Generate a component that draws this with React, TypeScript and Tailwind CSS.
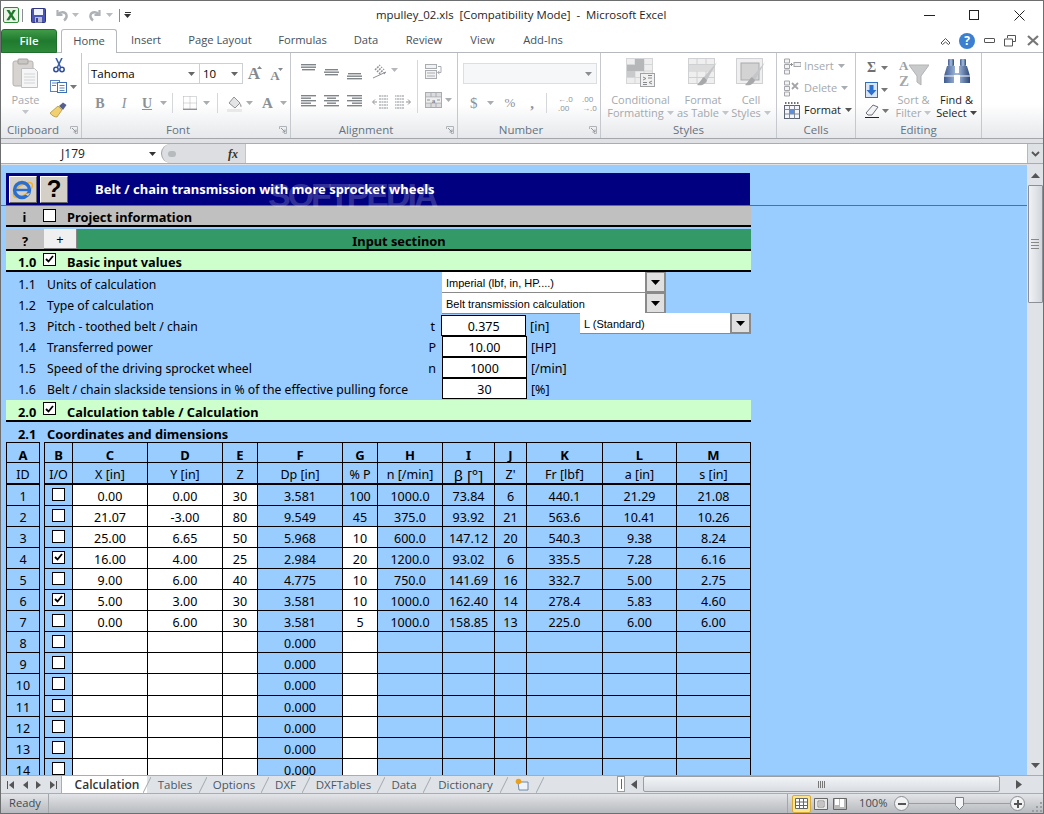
import type { ReactNode } from 'react';

// ── Small drawn parts ────────────────────────────────────────────────────────

function Caret({ className = 'text-[#a9adb2]' }: { className?: string }) {
  return (
    <svg width="7" height="4" viewBox="0 0 7 4" className={`shrink-0 ${className}`}>
      <path d="M0 0h7L3.5 4z" fill="currentColor" />
    </svg>
  );
}

function Lines({ rows, y = 3 }: { rows: [number, number][]; y?: number }) {
  return (
    <svg width="16" height={rows.length * y + 2} className="shrink-0">
      {rows.map(([a, b], i) => (
        <rect key={i} x={a} y={i * y} width={b - a} height="1.4" fill="#7f8489" />
      ))}
    </svg>
  );
}

function ExcelIcon() {
  return (
    <svg width="16" height="16" viewBox="0 0 16 16">
      <rect x=".5" y=".5" width="15" height="15" rx="1.5" fill="#e9f3e6" stroke="#2f8a3a" />
      <path d="M3.5 3h3l1.7 3L10 3h2.8L9.6 8l3.4 5.2H10L8.1 10l-1.9 3.2H3.3L6.7 8z" fill="#1f7a2f" />
    </svg>
  );
}

function SaveIcon() {
  return (
    <svg width="15" height="15" viewBox="0 0 15 15">
      <rect x=".5" y=".5" width="14" height="14" rx="1" fill="#4a55b5" stroke="#2f3580" />
      <rect x="3" y="1" width="9" height="6" fill="#eef2fb" />
      <rect x="4" y="9" width="7" height="5.5" fill="#b8bdd6" />
      <rect x="5" y="10" width="2" height="4" fill="#3d4590" />
    </svg>
  );
}

function UndoIcon({ flip = false }: { flip?: boolean }) {
  return (
    <svg width="15" height="14" viewBox="0 0 15 14" className={flip ? '-scale-x-100' : ''}>
      <path d="M3.5 2v5h5" fill="none" stroke="#aeb2b7" strokeWidth="2.2" />
      <path d="M4 6.5c2-3 7.5-3 8.5 .5 .5 2-.5 4-2.5 5.5" fill="none" stroke="#aeb2b7" strokeWidth="2.4" />
    </svg>
  );
}

function PasteIcon() {
  return (
    <svg width="27" height="31" viewBox="0 0 27 31">
      <rect x="1" y="3" width="20" height="25" rx="2" fill="#d6d3d0" stroke="#b5b2ae" />
      <rect x="6" y="1" width="10" height="5" rx="1" fill="#c9c7c4" stroke="#a5a3a0" />
      <path d="M9.5 10.5h13l3 3v16h-16z" fill="#f6f6f6" stroke="#bdbfc2" />
      <path d="M12 16h11M12 19h11M12 22h11M12 25h11" stroke="#d2d4d7" />
    </svg>
  );
}

function ScissorsIcon() {
  return (
    <svg width="12" height="15" viewBox="0 0 12 15">
      <path d="M3 0l4.5 9M9 0L4.5 9" stroke="#3b5fa8" strokeWidth="1.6" />
      <circle cx="3" cy="11.5" r="2.2" fill="none" stroke="#2f4f99" strokeWidth="1.5" />
      <circle cx="9" cy="11.5" r="2.2" fill="none" stroke="#2f4f99" strokeWidth="1.5" />
    </svg>
  );
}

function CopyIcon() {
  return (
    <svg width="17" height="13" viewBox="0 0 17 13">
      <rect x=".5" y=".5" width="9" height="11" fill="#fff" stroke="#5a85c0" />
      <rect x="7.5" y="2.5" width="9" height="10" fill="#fff" stroke="#3f6fb0" />
      <path d="M2 3h5M2 5.5h4M9.5 5.5h5M9.5 8h5M9.5 10.5h5" stroke="#5a85c0" />
    </svg>
  );
}

function BrushIcon() {
  return (
    <svg width="17" height="16" viewBox="0 0 17 16">
      <path d="M0 11L8 4l4 4-5 7c-2 0-5-1-7-4z" fill="#f0d070" stroke="#a98b30" strokeWidth=".7" />
      <path d="M9 4l4-3.5 3.5 2.5-3.5 5z" fill="#55608c" />
    </svg>
  );
}

function GrowA({ small = false }: { small?: boolean }) {
  return (
    <span className="relative flex h-[16px] w-[16px] items-end justify-center font-['Liberation_Serif',serif] font-bold leading-none text-[#85898e]">
      <span className={small ? 'text-[13px]' : 'text-[17px]'}>A</span>
      <svg width="5" height="3" className={`absolute right-0 ${small ? 'top-[2px] rotate-180' : 'top-0'}`}>
        <path d="M0 3h5L2.5 0z" fill="#85898e" />
      </svg>
    </span>
  );
}

function BorderIcon() {
  return (
    <svg width="14" height="14" viewBox="0 0 14 14">
      <path d="M.5 .5h13v13M.5 .5v13M7 .5v13M.5 7h13" stroke="#b2b5b9" strokeDasharray="1 1" fill="none" />
      <path d="M0 13.3h14" stroke="#8f9296" strokeWidth="1.4" />
    </svg>
  );
}

function FillIcon() {
  return (
    <svg width="16" height="17" viewBox="0 0 16 17">
      <path d="M2 8l5-6 6 6-5 5z" fill="#e4e5e7" stroke="#909397" />
      <path d="M13 8c2 2 2 4 1 4s-1.5-2-1-4z" fill="#a8abae" />
      <rect x="0" y="14" width="15" height="3" fill="#e9e9ea" />
    </svg>
  );
}

function OrientationIcon() {
  return (
    <svg width="16" height="16" viewBox="0 0 16 16">
      <path d="M3 7l5-5M5 9l5-5M7 11l5-5" stroke="#8d9196" strokeWidth="1.5" strokeDasharray="2 1" />
      <path d="M1 15L14 9" stroke="#8d9196" />
      <path d="M14 9l-3 .2 1.5 2.3z" fill="#8d9196" />
    </svg>
  );
}

function WrapIcon() {
  return (
    <svg width="17" height="15" viewBox="0 0 17 15">
      <rect x=".5" y=".5" width="11" height="4" fill="#f2f2f3" stroke="#a9acb0" />
      <rect x=".5" y="6.5" width="11" height="8" fill="#f2f2f3" stroke="#a9acb0" />
      <path d="M2 9h8M2 12h8" stroke="#a9acb0" />
      <path d="M13 2.5h3v6h-3M14.5 7l-2 1.5 2 1.5" stroke="#a9acb0" fill="none" />
    </svg>
  );
}

function MergeIcon() {
  return (
    <svg width="17" height="16" viewBox="0 0 17 16">
      <rect x=".5" y=".5" width="16" height="15" fill="#dcdcde" stroke="#a9acb0" />
      <path d="M.5 5h16M.5 11h16M6 .5V5M11 .5V5M6 11v4.5M11 11v4.5" stroke="#a9acb0" />
      <rect x="1" y="5.5" width="15" height="5" fill="#eeeeef" />
      <text x="8.5" y="10.5" fontSize="7" fontFamily="Liberation Serif" fontWeight="700" textAnchor="middle" fill="#7f8287">a</text>
      <path d="M2 8h3M15 8h-3" stroke="#8d9196" />
    </svg>
  );
}

function IndentIcon({ flip = false }: { flip?: boolean }) {
  return (
    <svg width="16" height="14" viewBox="0 0 16 14" className={flip ? '-scale-x-100' : ''}>
      <path d="M7 1h9M7 4h9M7 7h9M7 10h9M7 13h9" stroke="#8d9196" strokeDasharray="2 .5" />
      <path d="M5 7H1M3 4.5L.5 7 3 9.5" stroke="#8d9196" fill="none" />
    </svg>
  );
}

function CondFormatIcon() {
  return (
    <svg width="29" height="29" viewBox="0 0 29 29">
      <rect x=".5" y=".5" width="26" height="25" fill="#eeeeef" stroke="#d5d6d8" />
      <path d="M9 .5v25M18 .5v25M.5 6.5h26M.5 13h26M.5 19.5h26" stroke="#d5d6d8" />
      <rect x="1" y="7" width="17" height="6" fill="#b6b7b9" />
      <rect x="9" y="1" width="9" height="6" fill="#b6b7b9" />
      <rect x="1" y="13" width="8" height="6" fill="#c9cacb" />
      <rect x="14.5" y="15.5" width="14" height="13" fill="#f1f1f2" stroke="#9fa1a4" />
      <path d="M17 19l3 1.5-3 1.5M26 17.5h-4M26 20h-4M17 24.5h4M17 26.5h4M26 23l-3 1.5 3 1.5" stroke="#85888c" fill="none" />
    </svg>
  );
}

function TableStyleIcon({ cell = false }: { cell?: boolean }) {
  return (
    <svg width="30" height="29" viewBox="0 0 30 29">
      <rect x=".5" y=".5" width="26" height="25" fill="#efeff0" stroke="#d0d1d3" />
      {cell ? (
        <rect x="5" y="5" width="18" height="17" fill="#d3d3d4" stroke="#a9aaac" />
      ) : (
        <>
          <path d="M9 .5v25M18 .5v25M.5 6.5h26M.5 13h26M.5 19.5h26" stroke="#cfd0d2" />
          <rect x="1" y="7" width="25" height="6" fill="#dcdcdd" />
        </>
      )}
      <path d="M29 4L16 19l3 3z" fill="#c5c6c8" />
      <path d="M16 19c-2 1-3 4-7 8 5 1 9-1 10-5z" fill="#a7a8aa" />
    </svg>
  );
}

function FilterIcon() {
  return (
    <svg width="31" height="30" viewBox="0 0 31 30">
      <path d="M11 7h20l-8 11v9l-4-3v-6z" fill="#c9cacb" stroke="#b2b3b5" />
      <text x="1" y="12" fontSize="13" fontWeight="700" fontFamily="Liberation Serif" fill="#9b9da0">A</text>
      <text x="1" y="28" fontSize="15" fontWeight="700" fontFamily="Liberation Serif" fill="#a6a8ab">Z</text>
    </svg>
  );
}

function BinocularsIcon() {
  return (
    <svg width="28" height="26" viewBox="0 0 28 26">
      <defs>
        <linearGradient id="bino" x1="0" x2="1" y1="0" y2="0">
          <stop offset="0" stopColor="#3d5a8f" />
          <stop offset=".5" stopColor="#a8c0e0" />
          <stop offset="1" stopColor="#2e4878" />
        </linearGradient>
      </defs>
      <rect x="5" y="1" width="6" height="7" rx="1" fill="url(#bino)" />
      <rect x="17" y="1" width="6" height="7" rx="1" fill="url(#bino)" />
      <path d="M4 8h8v7h4V8h8l3 10v7H17v-8h-6v8H1v-7z" fill="url(#bino)" />
      <rect x="1" y="17" width="10" height="2" fill="#dfe8f5" opacity=".6" />
      <rect x="17" y="17" width="10" height="2" fill="#dfe8f5" opacity=".6" />
    </svg>
  );
}

function InsertIcon() {
  return (
    <svg width="17" height="17" viewBox="0 0 17 17">
      <path d="M.5 1h5v4h-5zM.5 6.5h5v4h-5zM.5 12h5v4h-5z" fill="#f3f3f4" stroke="#a3a5a8" />
      <rect x="10" y="4.5" width="7" height="4" fill="#f3f3f4" stroke="#a3a5a8" />
      <path d="M6 6.5h3M7.5 5v3" stroke="#8f9296" />
    </svg>
  );
}

function DeleteIcon() {
  return (
    <svg width="17" height="17" viewBox="0 0 17 17">
      <path d="M.5 1h5v4h-5zM.5 6.5h5v4h-5zM.5 12h5v4h-5z" fill="#f3f3f4" stroke="#a3a5a8" />
      <path d="M8 3l6 6M14 3L8 9" stroke="#a3a5a8" strokeWidth="1.8" />
    </svg>
  );
}

function FormatIcon() {
  return (
    <svg width="17" height="17" viewBox="0 0 17 17">
      <rect x=".5" y="3.5" width="15" height="13" fill="#f4f6fb" stroke="#5b6472" />
      <path d="M.5 7.5h15M.5 12h15M5.5 3.5v13M10.5 3.5v13" stroke="#7f8998" />
      <rect x="6" y="8" width="4" height="4" fill="#5f8fdc" />
      <path d="M1 1h14" stroke="#3c4048" strokeDasharray="1.5 1.5" strokeWidth="1.5" />
    </svg>
  );
}

function FillDownIcon() {
  return (
    <svg width="13" height="16" viewBox="0 0 13 16">
      <rect x=".5" y=".5" width="12" height="15" fill="#d7e5f7" stroke="#2f6fc0" />
      <path d="M4.5 3h4v5h3l-5 5.5L1.5 8h3z" fill="#2b6fd0" />
    </svg>
  );
}

function EraserIcon() {
  return (
    <svg width="15" height="14" viewBox="0 0 15 14">
      <path d="M1 9l7-8 5 2-6 8H3z" fill="#f3f4f6" stroke="#6c7078" />
      <path d="M0 13.5h14" stroke="#222" />
    </svg>
  );
}

function Launcher() {
  return (
    <svg width="8" height="8" viewBox="0 0 8 8" className="absolute bottom-[4px] right-[3px]">
      <path d="M.5 3V.5H7.5V7.5H5" fill="none" stroke="#b0b4b9" />
      <path d="M2 2l4 4M6 3.5V6H3.5" fill="none" stroke="#8f959b" />
    </svg>
  );
}

// ── Ribbon ───────────────────────────────────────────────────────────────────

function Group({ className, label, launcher, children }: {
  className: string;
  label: string;
  launcher?: boolean;
  children: ReactNode;
}) {
  return (
    <div className={`relative flex shrink-0 flex-col border-r border-[#c5c9ce] ${className}`}>
      <div className="flex h-[69px] min-h-0">{children}</div>
      <div className={`h-[16px] text-center text-[11.5px] leading-[15px] text-[#66727f] ${launcher ? 'pr-[16px]' : ''}`}>{label}</div>
      {launcher && <Launcher />}
    </div>
  );
}

function BigButton({ icon, top, bottom, dark, className }: {
  icon: ReactNode;
  top: string;
  bottom: string;
  dark?: boolean;
  className: string;
}) {
  return (
    <div className={`flex flex-col items-center pt-[5px] text-[11px] leading-[13px] ${dark ? 'text-[#1c1c1c]' : 'text-[#a4a8ad]'} ${className}`}>
      <div className="flex h-[33px] items-start">{icon}</div>
      <span className="mt-[2px] whitespace-nowrap">{top}</span>
      <span className="flex items-center gap-[3px] whitespace-nowrap">{bottom}<Caret className={dark ? 'text-[#444]' : 'text-[#c2c5c9]'} /></span>
    </div>
  );
}

function CellsRow({ icon, label, dark }: { icon: ReactNode; label: string; dark?: boolean }) {
  return (
    <div className={`flex h-[22px] items-center gap-[3px] text-[11px] ${dark ? 'text-[#1c1c1c]' : 'text-[#a4a8ad]'}`}>
      {icon}
      <span>{label}</span>
      <Caret className={`ml-[1px] ${dark ? 'text-[#555]' : 'text-[#a9adb2]'}`} />
    </div>
  );
}

function Ribbon() {
  return (
    <div className="flex h-[86px] shrink-0 border-b border-[#a3a7ab] bg-gradient-to-b from-white from-60% to-[#e6e8eb]">
      <Group className="w-[81px]" label="Clipboard" launcher>
        <div className="flex w-[49px] flex-col items-center pt-[5px]">
          <PasteIcon />
          <span className="mt-[4px] text-[11px] leading-[13px] text-[#a4a8ad]">Paste</span>
          <Caret className="mt-[4px] text-[#c2c5c9]" />
        </div>
        <div className="flex flex-col pt-[5px]">
          <div className="ml-[3px]"><ScissorsIcon /></div>
          <div className="mt-[7px] flex items-center gap-[3px]"><CopyIcon /><Caret className="text-[#777]" /></div>
          <div className="mt-[9px]"><BrushIcon /></div>
        </div>
      </Group>

      <Group className="w-[209px]" label="Font" launcher>
        <div className="flex flex-col pl-[6px] pt-[10px]">
          <div className="flex items-center">
            <div className="flex h-[21px] w-[112px] items-center justify-between border border-[#ccd0d4] bg-white pl-[2px] pr-[4px] text-[11.5px] text-black">
              Tahoma <Caret className="text-[#666]" />
            </div>
            <div className="flex h-[21px] w-[43px] items-center justify-between border border-l-0 border-[#ccd0d4] bg-white pl-[3px] pr-[4px] text-[11.5px] text-black">
              10 <Caret className="text-[#666]" />
            </div>
            <div className="ml-[3px] flex gap-[5px]"><GrowA /><GrowA small /></div>
          </div>
          <div className="mt-[9px] flex h-[20px] items-center text-[#8d9196]">
            <span className="ml-[2px] w-[20px] text-center font-['Liberation_Serif',serif] text-[14px] font-bold">B</span>
            <span className="ml-[4px] w-[20px] text-center font-['Liberation_Serif',serif] text-[14px] italic">I</span>
            <span className="ml-[3px] w-[20px] text-center font-['Liberation_Serif',serif] text-[14px] font-bold underline">U</span>
            <Caret className="ml-[3px] text-[#a9adb2]" />
            <span className="ml-[5px] h-[20px] w-px bg-[#d5d8db]" />
            <span className="ml-[10px]"><BorderIcon /></span>
            <Caret className="ml-[6px] text-[#a9adb2]" />
            <span className="ml-[7px] h-[20px] w-px bg-[#d5d8db]" />
            <span className="ml-[9px]"><FillIcon /></span>
            <Caret className="ml-[3px] text-[#a9adb2]" />
            <span className="ml-[9px] font-['Liberation_Serif',serif] text-[15px] font-bold">A</span>
            <Caret className="ml-[7px] text-[#a9adb2]" />
          </div>
        </div>
      </Group>

      <Group className="w-[167px]" label="Alignment" launcher>
        <div className="flex flex-col pl-[10px] pt-[10px]">
          <div className="flex h-[22px] gap-[7px]">
            <div className="mt-[1px]"><Lines rows={[[0, 15], [0, 15], [1, 14]]} y={2.5} /></div>
            <div className="mt-[6px]"><Lines rows={[[1, 14], [0, 15], [1, 14]]} y={2.5} /></div>
            <div className="mt-[10px]"><Lines rows={[[1, 14], [0, 15], [0, 15]]} y={2.5} /></div>
            <div className="ml-[2px] flex items-start gap-[3px]"><OrientationIcon /><Caret className="mt-[5px] text-[#b4b7bb]" /></div>
          </div>
          <div className="mt-[10px] flex items-center gap-[7px]">
            <Lines rows={[[0, 15], [0, 10], [0, 15], [0, 10], [0, 15]]} y={2.5} />
            <Lines rows={[[0, 15], [3, 12], [0, 15], [3, 12], [0, 15]]} y={2.5} />
            <Lines rows={[[0, 15], [5, 15], [0, 15], [5, 15], [0, 15]]} y={2.5} />
            <div className="ml-[2px]"><IndentIcon /></div>
            <IndentIcon flip />
          </div>
        </div>
        <span className="ml-[6px] mt-[7px] h-[53px] w-px bg-[#d5d8db]" />
        <div className="ml-[7px] flex flex-col pt-[11px]">
          <WrapIcon />
          <div className="mt-[13px] flex items-center gap-[3px]"><MergeIcon /><Caret /></div>
        </div>
      </Group>

      <Group className="w-[143px]" label="Number" launcher>
        <div className="flex flex-col pl-[5px] pt-[10px]">
          <div className="flex h-[21px] w-[134px] items-center justify-end border border-[#dcdfe2] bg-[#f6f7f8] pr-[4px]">
            <Caret className="text-[#8a8d91]" />
          </div>
          <div className="mt-[9px] flex h-[20px] items-center whitespace-nowrap font-['Liberation_Serif',serif] text-[#8d9196]">
            <span className="ml-[7px] text-[15px]">$</span>
            <Caret className="ml-[9px] text-[#a9adb2]" />
            <span className="ml-[11px] text-[13px]">%</span>
            <span className="ml-[15px] text-[15px] font-bold">,</span>
            <span className="ml-[12px] h-[20px] w-px bg-[#d5d8db]" />
            <span className="ml-[11px] w-[14px] font-['Open_Sans',sans-serif] text-[8px] leading-[9px]">←.0<br />.00</span>
            <span className="ml-[10px] w-[14px] font-['Open_Sans',sans-serif] text-[8px] leading-[9px]">.00<br />→.0</span>
          </div>
        </div>
      </Group>

      <Group className="w-[176px]" label="Styles">
        <BigButton className="w-[79px]" icon={<CondFormatIcon />} top="Conditional" bottom="Formatting" />
        <BigButton className="w-[46px]" icon={<TableStyleIcon />} top="Format" bottom="as Table" />
        <BigButton className="w-[50px]" icon={<TableStyleIcon cell />} top="Cell" bottom="Styles" />
      </Group>

      <Group className="w-[79px]" label="Cells">
        <div className="flex flex-col pl-[7px] pt-[2px]">
          <CellsRow icon={<InsertIcon />} label="Insert" />
          <CellsRow icon={<DeleteIcon />} label="Delete" />
          <CellsRow icon={<FormatIcon />} label="Format" dark />
        </div>
      </Group>

      <Group className="w-[126px]" label="Editing">
        <div className="flex w-[36px] flex-col pl-[9px] pt-[4px]">
          <div className="flex h-[22px] items-center gap-[5px]">
            <span className="ml-[2px] font-['Liberation_Serif',serif] text-[14px] font-bold leading-none text-[#6c7075]">Σ</span>
            <Caret className="text-[#777]" />
          </div>
          <div className="flex h-[22px] items-center gap-[3px]"><FillDownIcon /><Caret className="text-[#777]" /></div>
          <div className="flex h-[22px] items-center gap-[2px]"><EraserIcon /><Caret className="text-[#777]" /></div>
        </div>
        <BigButton className="w-[43px]" icon={<FilterIcon />} top="Sort &" bottom="Filter" />
        <BigButton className="w-[43px]" icon={<BinocularsIcon />} top="Find &" bottom="Select" dark />
      </Group>
    </div>
  );
}

// ── Title bar + tabs ─────────────────────────────────────────────────────────

function TitleBar() {
  return (
    <div className="relative flex h-[28px] shrink-0 items-center bg-white pl-[2px]">
      <ExcelIcon />
      <span className="ml-[3px] h-[13px] w-px bg-[#8a8d91]" />
      <span className="ml-[8px]"><SaveIcon /></span>
      <span className="ml-[8px]"><UndoIcon /></span>
      <Caret className="ml-[3px] text-[#b8bbbf]" />
      <span className="ml-[9px]"><UndoIcon flip /></span>
      <Caret className="ml-[3px] text-[#b8bbbf]" />
      <span className="ml-[6px] h-[13px] w-px bg-[#8a8d91]" />
      <span className="ml-[4px] flex flex-col items-center gap-[1px]">
        <span className="h-px w-[6px] bg-[#333]" />
        <Caret className="text-[#333]" />
      </span>
      <span className="absolute left-[375px] whitespace-pre text-[11.4px] text-[#1e1e1e]">mpulley_02.xls  [Compatibility Mode]  -  Microsoft Excel</span>
      <div className="ml-auto flex items-center pr-[18px]">
        <span className="mt-[1px] h-px w-[11px] bg-[#222]" />
        <span className="ml-[34px] h-[10px] w-[10px] border border-[#222]" />
        <svg width="11" height="11" viewBox="0 0 11 11" className="ml-[35px]">
          <path d="M.5 .5l10 10M10.5 .5l-10 10" stroke="#222" />
        </svg>
      </div>
    </div>
  );
}

const tabs = [
  { label: 'Insert', w: 'w-[58px]' },
  { label: 'Page Layout', w: 'w-[90px]' },
  { label: 'Formulas', w: 'w-[75px]' },
  { label: 'Data', w: 'w-[52px]' },
  { label: 'Review', w: 'w-[64px]' },
  { label: 'View', w: 'w-[53px]' },
  { label: 'Add-Ins', w: 'w-[68px]' },
];

function TabRow() {
  return (
    <div className="flex h-[24px] shrink-0 border-b border-[#b5b9be] bg-white text-[11.2px] text-[#45505c]">
      <div className="flex h-[24px] w-[56px] items-center justify-center rounded-t-[3px] border border-[#1f6e2b] bg-gradient-to-b from-[#3f9a48] via-[#1f7a2e] to-[#2d8a39] text-[11.5px] font-semibold text-white">
        File
      </div>
      <div className="relative z-10 ml-[4px] flex h-[24px] w-[56px] items-center justify-center rounded-t-[3px] border border-b-0 border-[#b5b9be] bg-white">
        Home
      </div>
      {tabs.map(t => (
        <div key={t.label} className={`flex items-center justify-center ${t.w}`}>{t.label}</div>
      ))}
      <div className="ml-auto flex items-center pr-[4px]">
        <svg width="11" height="8" viewBox="0 0 11 8"><path d="M1 6l4.5-4.5L10 6 8.5 7.5 5.5 5l-3 2.5z" fill="#fff" stroke="#555" /></svg>
        <span className="ml-[8px] flex h-[16px] w-[16px] items-center justify-center rounded-full bg-[#3b7fd0] text-[12px] font-bold text-white">?</span>
        <span className="ml-[9px] h-[5px] w-[11px] rounded-[1px] border border-[#555]" />
        <svg width="12" height="12" viewBox="0 0 12 12" className="ml-[9px]"><path d="M3.5 3V.5h8v6H9M.5 4h8v7h-8z" fill="#fff" stroke="#555" /></svg>
        <svg width="12" height="11" viewBox="0 0 12 11" className="ml-[11px]"><path d="M1 1l10 9M11 1L1 10" stroke="#777" strokeWidth="2.2" /></svg>
      </div>
    </div>
  );
}

function FormulaBar() {
  return (
    <div className="flex h-[26px] shrink-0 flex-col bg-[#dfe1e4] pt-[4px]">
      <div className="flex h-[21px] border-y border-[#a9adb1] bg-white text-[12px]">
        <div className="relative flex w-[160px] items-center justify-center pr-[16px] text-[#222]">
          J179
          <Caret className="absolute right-[5px] text-[#333]" />
        </div>
        <div className="flex w-[85px] items-center rounded-l-full border-r border-[#c2c5c9] border-l border-l-[#9fa3a7] bg-[#dcdee1] pl-[6px]">
          <span className="h-[6px] w-[8px] rounded-full bg-[#b7babd]" />
          <span className="ml-auto pr-[7px] font-['Liberation_Serif',serif] text-[12px] font-bold italic text-[#333]">fx</span>
        </div>
        <div className="flex-1" />
        <div className="flex w-[16px] items-center justify-center border-l border-[#b5b9be] bg-[#dfe2e5]">
          <svg width="9" height="6" viewBox="0 0 9 6"><path d="M1 1l3.5 3.5L8 1" fill="none" stroke="#555" strokeWidth="1.8" /></svg>
        </div>
      </div>
    </div>
  );
}

// ── Sheet ────────────────────────────────────────────────────────────────────

function CheckBox({ checked, size = 'h-[13px] w-[13px]' }: { checked?: boolean; size?: string }) {
  return (
    <span className={`flex shrink-0 items-center justify-center border border-black bg-white ${size}`}>
      {checked && (
        <svg width="9" height="8" viewBox="0 0 9 8"><path d="M1 4l2.5 2.5L8 1" fill="none" stroke="#000" strokeWidth="1.8" /></svg>
      )}
    </span>
  );
}

function DropDown({ value, className }: { value: string; className: string }) {
  return (
    <div className={`flex h-[21px] shrink-0 items-stretch border-r-2 border-b border-[#8a8a8a] bg-white ${className}`}>
      <span className="flex flex-1 items-center pl-[4px] pt-[2px] font-['Liberation_Sans',sans-serif] text-[11px]">{value}</span>
      <span className="flex w-[19px] items-center justify-center border-x-2 border-y border-[#8a8a8a] border-r-0 bg-[#e0e0e0]">
        <svg width="9" height="5" viewBox="0 0 9 5"><path d="M0 0h9L4.5 5z" fill="#000" /></svg>
      </span>
    </div>
  );
}

const inputRows: { no: string; label: string; sym?: string; field?: string; unit?: string; drop?: string; extra?: string }[] = [
  { no: '1.1', label: 'Units of calculation', drop: 'Imperial (lbf, in, HP....)' },
  { no: '1.2', label: 'Type of calculation', drop: 'Belt transmission calculation' },
  { no: '1.3', label: 'Pitch - toothed belt / chain', sym: 't', field: '0.375', unit: '[in]', extra: 'L (Standard)' },
  { no: '1.4', label: 'Transferred power', sym: 'P', field: '10.00', unit: '[HP]' },
  { no: '1.5', label: 'Speed of the driving sprocket wheel', sym: 'n', field: '1000', unit: '[/min]' },
  { no: '1.6', label: 'Belt / chain slackside tensions in % of the effective pulling force', field: '30', unit: '[%]' },
];

const colWidths = ['w-[34px]', 'w-[4px]', 'w-[29px]', 'w-[75px]', 'w-[75px]', 'w-[35px]', 'w-[85px]', 'w-[35px]', 'w-[65px]', 'w-[52px]', 'w-[32px]', 'w-[76px]', 'w-[74px]', 'w-[74px]'];

const letters = ['C', 'D', 'E', 'F', 'G', 'H', 'I', 'J', 'K', 'L', 'M'];
const units = ['X [in]', 'Y [in]', 'Z', 'Dp [in]', '% P', 'n [/min]', 'β [°]', "Z'", 'Fr [lbf]', 'a [in]', 's [in]'];

const tableRows = [
  ['0.00', '0.00', '30', '3.581', '100', '1000.0', '73.84', '6', '440.1', '21.29', '21.08'],
  ['21.07', '-3.00', '80', '9.549', '45', '375.0', '93.92', '21', '563.6', '10.41', '10.26'],
  ['25.00', '6.65', '50', '5.968', '10', '600.0', '147.12', '20', '540.3', '9.38', '8.24'],
  ['16.00', '4.00', '25', '2.984', '20', '1200.0', '93.02', '6', '335.5', '7.28', '6.16'],
  ['9.00', '6.00', '40', '4.775', '10', '750.0', '141.69', '16', '332.7', '5.00', '2.75'],
  ['5.00', '3.00', '30', '3.581', '10', '1000.0', '162.40', '14', '278.4', '5.83', '4.60'],
  ['0.00', '6.00', '30', '3.581', '5', '1000.0', '158.85', '13', '225.0', '6.00', '6.00'],
  ...Array.from({ length: 7 }, () => ['', '', '', '0.000', '', '', '', '', '', '', '']),
];

function isWhite(col: number, row: number) {
  if (col <= 2) return true;
  return col === 4 && row >= 2;
}

function CalcTable() {
  const line = 'border-r border-b border-black p-0 text-center';
  return (
    <table className="table-fixed border-separate border-spacing-0 w-[745px]">
      <colgroup>
        {colWidths.map((w, i) => <col key={i} className={w} />)}
      </colgroup>
      <thead>
        <tr className="h-[21px] text-[13px] font-bold">
          <th className={`${line} border-t border-l pt-[5px]`}>A</th>
          <th className="p-0" />
          <th className={`${line} border-t border-l pt-[5px]`}>B</th>
          {letters.map(l => <th key={l} className={`${line} border-t pt-[5px]`}>{l}</th>)}
        </tr>
        <tr className="h-[22px] font-normal">
          <th className={`${line} border-b-[2px] border-l pt-[4px] font-normal`}>ID</th>
          <th className="p-0" />
          <th className={`${line} border-b-[2px] border-l pt-[4px] font-normal`}>I/O</th>
          {units.map(u => (
            <th key={u} className={`${line} border-b-[2px] pt-[4px] font-normal ${u.startsWith('β') ? 'text-[15px]' : ''}`}>{u}</th>
          ))}
        </tr>
      </thead>
      <tbody>
        {tableRows.map((r, i) => (
          <tr key={i} className={i === 9 ? 'h-[22px]' : 'h-[21px]'}>
            <td className={`${line} border-l pt-[4px]`}>{i + 1}</td>
            <td className="p-0" />
            <td className={`${line} border-l`}>
              <div className="flex justify-center pb-[2px]"><CheckBox checked={i === 3 || i === 5} /></div>
            </td>
            {r.map((v, c) => (
              <td key={c} className={`${line} pt-[4px] ${isWhite(c, i) ? 'bg-white' : ''}`}>{v}</td>
            ))}
          </tr>
        ))}
      </tbody>
    </table>
  );
}

function Sheet() {
  return (
    <div className="min-w-0 flex-1 overflow-hidden bg-[#99ccff] font-['Noto_Sans',sans-serif] text-[12.5px] leading-none text-black">
      {/* frozen top pane */}
      <div className="relative h-[41px] border-b border-[#6b6b6b] pl-[5px] pt-[8px]">
        <div className="relative flex h-[32px] w-[744px] items-center bg-[#000080] pl-[3px]">
          <span className="flex h-[27px] w-[28px] items-center justify-center border border-t-white border-l-white border-r-[#666] border-b-[#666] bg-[#d4d0c8]">
            <svg width="24" height="23" viewBox="0 0 24 23">
              <ellipse cx="12" cy="12" rx="11" ry="5" fill="none" stroke="#f0b030" strokeWidth="1.5" transform="rotate(-35 12 12)" />
              <circle cx="11" cy="12" r="7.5" fill="none" stroke="#2a6fd0" strokeWidth="3.4" />
              <path d="M4 12h14" stroke="#2a6fd0" strokeWidth="2.4" />
              <path d="M14 16l5-1-2 3z" fill="#d4d0c8" />
            </svg>
          </span>
          <span className="ml-[3px] flex h-[27px] w-[28px] items-center justify-center border border-t-white border-l-white border-r-[#666] border-b-[#666] bg-[#d4d0c8] font-['Liberation_Sans',sans-serif] text-[24px] font-bold text-black">?</span>
          <span className="relative z-10 ml-[27px] text-[13px] font-bold text-white">Belt / chain transmission with more sprocket wheels</span>
        </div>
        <span className="absolute left-[267px] top-[13px] font-['Liberation_Sans',sans-serif] text-[34px] font-bold tracking-[-3px] text-white/20">SOFTPEDIA</span>
      </div>

      <div className="pl-[5px]">
        <div className="flex h-[21px] w-[745px] items-center border-b-[2px] border-black bg-[#c0c0c0] text-[12.8px] font-bold">
          <span className="w-[37px] pt-[4px] text-center">i</span>
          <CheckBox size="h-[13px] w-[13px] border-[#555]" />
          <span className="ml-[11px] pt-[4px]">Project information</span>
        </div>
        <div className="mt-[2px] flex h-[22px] w-[745px] border-b-[2px] border-black text-[12.8px] font-bold">
          <span className="flex w-[38px] items-center justify-center bg-[#c0c0c0] pt-[4px]">?</span>
          <span className="flex w-[33px] items-center justify-center border-r border-b border-[#888] bg-[#f0f0f0] pt-[2px] font-normal">+</span>
          <span className="flex flex-1 items-center justify-center bg-[#339966] pr-[30px] pt-[4px]">Input sectinon</span>
        </div>
        <div className="flex h-[21px] w-[745px] items-center border-b-[2px] border-black bg-[#ccffcc] text-[12.8px] font-bold">
          <span className="w-[37px] pl-[12px] pt-[4px]">1.0</span>
          <span className="mb-[3px]"><CheckBox checked /></span>
          <span className="ml-[11px] pt-[4px]">Basic input values</span>
        </div>

        {inputRows.map(r => (
          <div key={r.no} className="flex h-[21px] w-[745px] items-center">
            <span className="w-[41px] pl-[1px] pt-[5px] text-center">{r.no}</span>
            <span className="w-[389px] whitespace-nowrap pt-[5px] text-[12.2px]">{r.label}</span>
            <span className="ml-[-10px] w-[10px] pt-[5px] text-right">{r.sym}</span>
            <span className="w-[6px]" />
            {r.drop && <DropDown value={r.drop} className="w-[224px]" />}
            {r.field && (
              <span className="-mb-px flex h-[21px] w-[85px] shrink-0 items-center justify-center border border-black bg-white pt-[4px]">{r.field}</span>
            )}
            {r.unit && <span className="ml-[4px] w-[49px] pt-[5px]">{r.unit}</span>}
            {r.extra && <DropDown value={r.extra} className="mb-[2px] ml-[1px] w-[171px]" />}
          </div>
        ))}

        <div className="mt-[2px] flex h-[22px] w-[745px] items-center border-b-[2px] border-black bg-[#ccffcc] text-[12.8px] font-bold">
          <span className="w-[37px] pl-[12px] pt-[4px]">2.0</span>
          <span className="mb-[3px]"><CheckBox checked /></span>
          <span className="ml-[11px] pt-[4px]">Calculation table / Calculation</span>
        </div>
        <div className="flex h-[20px] items-center text-[12.8px] font-bold">
          <span className="w-[37px] pl-[12px] pt-[4px]">2.1</span>
          <span className="ml-[4px] pt-[4px]">Coordinates and dimensions</span>
        </div>
        <CalcTable />
      </div>
    </div>
  );
}

function VScroll() {
  return (
    <div className="flex w-[16px] shrink-0 flex-col items-center bg-[#dfe2e6]">
      <div className="flex h-[20px] items-center justify-center">
        <svg width="9" height="5" viewBox="0 0 9 5"><path d="M0 5h9L4.5 0z" fill="#555" /></svg>
      </div>
      <div className="flex h-[118px] w-[15px] flex-col items-center justify-center gap-[2px] rounded-[1px] border border-[#8c9096] bg-gradient-to-r from-[#f0f2f5] to-[#d2d6dc]">
        <span className="h-px w-[8px] bg-[#888]" />
        <span className="h-px w-[8px] bg-[#888]" />
        <span className="h-px w-[8px] bg-[#888]" />
        <span className="h-px w-[8px] bg-[#888]" />
      </div>
      <div className="mt-auto flex h-[20px] items-center justify-center">
        <svg width="9" height="5" viewBox="0 0 9 5"><path d="M0 0h9L4.5 5z" fill="#555" /></svg>
      </div>
    </div>
  );
}

// ── Bottom bars ──────────────────────────────────────────────────────────────

const sheetTabs = [
  { label: 'Tables', w: 'w-[56px]' },
  { label: 'Options', w: 'w-[62px]' },
  { label: 'DXF', w: 'w-[41px]' },
  { label: 'DXFTables', w: 'w-[75px]' },
  { label: 'Data', w: 'w-[46px]' },
  { label: 'Dictionary', w: 'w-[77px]' },
];

function Slant() {
  return (
    <svg width="8" height="17" viewBox="0 0 8 17" className="-mx-[4px] shrink-0">
      <path d="M0 17L8 1" stroke="#a3a8ae" />
    </svg>
  );
}

function SheetTabs() {
  return (
    <div className="flex h-[18px] shrink-0 border-t border-[#a9adb2] bg-[#dfe3e8] text-[11.5px] text-[#4a5663]">
      <div className="flex w-[60px] items-center gap-[8px] pl-[6px] text-[#555]">
        <svg width="7" height="8" viewBox="0 0 7 8"><path d="M0 0h1v8H0zM7 0v8L2 4z" fill="currentColor" /></svg>
        <svg width="6" height="8" viewBox="0 0 6 8"><path d="M6 0v8L1 4z" fill="currentColor" /></svg>
        <svg width="6" height="8" viewBox="0 0 6 8"><path d="M0 0v8l5-4z" fill="currentColor" /></svg>
        <svg width="7" height="8" viewBox="0 0 7 8"><path d="M0 0v8l5-4zM6 0h1v8H6z" fill="currentColor" /></svg>
      </div>
      <div className="flex h-[17px] w-[86px] items-center justify-center border-l border-[#a9adb2] bg-white pl-[5px] text-[12px] font-semibold text-[#333]">Calculation</div>
      <Slant />
      {sheetTabs.map(t => (
        <div key={t.label} className="flex items-center">
          <div className={`flex items-center justify-center ${t.w}`}>{t.label}</div>
          <Slant />
        </div>
      ))}
      <div className="flex w-[36px] items-center justify-center">
        <svg width="16" height="14" viewBox="0 0 16 14">
          <path d="M4 4h10v8H5z" fill="#eef3fa" stroke="#6f8aa8" />
          <circle cx="4.5" cy="3.5" r="2.8" fill="#e8a020" />
        </svg>
      </div>
      <Slant />
      <div className="ml-[77px] flex h-[16px] w-[8px] items-center justify-center border border-[#9a9ea3] bg-white">
        <span className="h-[10px] w-px bg-[#666]" />
      </div>
      <div className="flex w-[18px] items-center justify-center">
        <svg width="6" height="9" viewBox="0 0 6 9"><path d="M6 0v9L0 4.5z" fill="#555" /></svg>
      </div>
      <div className="flex h-[16px] w-[357px] items-center justify-center gap-[1px] rounded-[2px] border border-[#9a9ea3] bg-gradient-to-b from-[#f2f4f6] to-[#d9dde2]">
        <span className="h-[7px] w-px bg-[#777]" />
        <span className="h-[7px] w-px bg-[#777]" />
        <span className="h-[7px] w-px bg-[#777]" />
        <span className="h-[7px] w-px bg-[#777]" />
      </div>
      <div className="flex w-[38px] items-center justify-center">
        <svg width="6" height="9" viewBox="0 0 6 9"><path d="M0 0v9l6-4.5z" fill="#555" /></svg>
      </div>
    </div>
  );
}

function StatusBar() {
  return (
    <div className="flex h-[20px] shrink-0 items-center border-t border-[#a9adb2] bg-gradient-to-b from-[#e2e4e7] to-[#b7babe] text-[11.2px] text-[#3f4a55]">
      <span className="flex h-full w-[48px] items-center border-r border-[#a3a6aa] pl-[8px]">Ready</span>
      <span className="ml-[738px] h-full w-px bg-[#a3a6aa]" />
      <span className="ml-[4px] flex h-[18px] w-[19px] items-center justify-center rounded-[2px] border border-[#d8a93c] bg-[#fde68a]">
        <svg width="13" height="11" viewBox="0 0 13 11"><path d="M.5 .5h12v10H.5zM.5 4h12M.5 7.5h12M4.5 .5v10M8.5 .5v10" fill="#fff" stroke="#666" /></svg>
      </span>
      <svg width="14" height="12" viewBox="0 0 14 12" className="ml-[3px]"><path d="M.5 .5h13v11H.5z" fill="#e7e7e7" stroke="#666" /><path d="M4 3h6v6H4zM5 5h4M5 7h4" fill="#fff" stroke="#888" /></svg>
      <svg width="14" height="12" viewBox="0 0 14 12" className="ml-[5px]"><path d="M.5 .5h13v11H.5z" fill="#b9b9b9" stroke="#666" /><path d="M2 1h4v6H2zM7 1h4v8H7z" fill="#fff" /></svg>
      <span className="ml-[12px] w-[27px] text-center">100%</span>
      <span className="ml-[8px] flex h-[15px] w-[15px] items-center justify-center rounded-full border border-[#8a8d91] bg-[#f1f2f3]">
        <span className="h-[2px] w-[8px] bg-[#555]" />
      </span>
      <div className="flex w-[101px] items-center">
        <span className="h-px w-[46px] bg-[#9a9da1]" />
        <svg width="9" height="13" viewBox="0 0 9 13" className="shrink-0"><path d="M.5 .5h8v8l-4 4-4-4z" fill="#f4f5f6" stroke="#7c8085" /></svg>
        <span className="h-px flex-1 bg-[#9a9da1]" />
      </div>
      <span className="relative flex h-[15px] w-[15px] items-center justify-center rounded-full border border-[#8a8d91] bg-[#f1f2f3]">
        <span className="h-[2px] w-[8px] bg-[#555]" />
        <span className="absolute h-[8px] w-[2px] bg-[#555]" />
      </span>
      <svg width="12" height="12" viewBox="0 0 12 12" className="ml-[6px] self-end">
        <path d="M9 1h2v2H9zM5 5h2v2H5zM9 5h2v2H9zM1 9h2v2H1zM5 9h2v2H5zM9 9h2v2H9z" fill="#9a9da1" />
      </svg>
    </div>
  );
}

export default function App() {
  return (
    <div className="flex h-[814px] w-[1044px] flex-col overflow-hidden border border-[#6c6e70] font-['Open_Sans',sans-serif]">
      <TitleBar />
      <TabRow />
      <Ribbon />
      <FormulaBar />
      <div className="flex min-h-0 flex-1">
        <Sheet />
        <VScroll />
      </div>
      <SheetTabs />
      <StatusBar />
    </div>
  );
}
